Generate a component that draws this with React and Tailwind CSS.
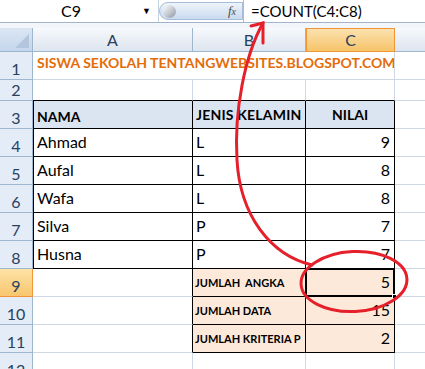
import React from "react";

const font = { fontFamily: "Lato, 'Liberation Sans', sans-serif" };

function RowHead({ n, selected }) {
  return (
    <div
      className={
        selected
          ? "w-[33px] shrink-0 flex items-end justify-center pb-[2px] border-r border-b border-[#f29536] bg-gradient-to-b from-[#fde3a6] to-[#f8c66e] text-[16px] leading-none text-[#27415f]"
          : "w-[33px] shrink-0 flex items-end justify-center pb-[2px] border-r border-b border-[#9eb6ce] bg-[#e4ecf7] text-[16px] leading-none text-[#27415f]"
      }
    >
      {n}
    </div>
  );
}

function Row({ n, h, selected, children }) {
  return (
    <div className={"flex " + h}>
      <RowHead n={n} selected={selected} />
      {children}
    </div>
  );
}

const grid = "border-r border-b border-[#d0d7e5]";

export default function App() {
  return (
    <div className="relative w-[425px] h-[369px] overflow-hidden bg-white" style={font}>
      {/* formula bar */}
      <div className="flex h-[23px] border-b border-[#a3b5cc] bg-white">
        <div className="w-[159px] flex items-center border-r border-[#c5d2e2]">
          <div className="w-[142px] text-center text-[16px] text-black">C9</div>
          <span className="text-[9px] text-black">▼</span>
        </div>
        <div className="w-[84px] my-[2px] flex items-center rounded-l-full border border-[#a6bcd8] bg-gradient-to-b from-[#eef4fb] to-[#c9daef]">
          <div className="ml-[3px] w-[13px] h-[13px] rounded-full bg-gradient-to-br from-[#ffffff] via-[#c8ccd3] to-[#8f969f]" />
          <span className="ml-auto mr-[6px] text-[13px] italic text-[#4a4a4a]" style={{ fontFamily: "'Liberation Serif', serif" }}>
            f<span className="text-[10px]">x</span>
          </span>
        </div>
        <div className="flex-1 flex items-center pl-[7px] border-l border-[#a6bcd8] text-[15px] text-black">
          =COUNT(C4:C8)
        </div>
      </div>
      <div className="h-[5px] bg-[#f2f5fa]" />

      {/* column headers */}
      <div className="flex h-[24px] text-[16px] text-[#27415f]">
        <div className="w-[33px] relative border-r border-b border-[#9eb6ce] bg-gradient-to-b from-[#dbe6f4] to-[#c5d6ec]">
          <div className="absolute right-[3px] bottom-[3px] w-0 h-0 border-l-[14px] border-l-transparent border-b-[14px] border-b-[#b3c6de]" />
        </div>
        <div className="w-[160px] flex items-center justify-center border-r border-b border-[#9eb6ce] bg-gradient-to-b from-[#f7f9fc] to-[#dde5ef]">A</div>
        <div className="w-[113px] flex items-center justify-center border-r border-b border-[#9eb6ce] bg-gradient-to-b from-[#f7f9fc] to-[#dde5ef]">B</div>
        <div className="w-[89px] flex items-center justify-center border border-[#f29536] bg-gradient-to-b from-[#fbe1ae] to-[#f6c468]">C</div>
        <div className="flex-1 border-b border-[#9eb6ce] bg-gradient-to-b from-[#f7f9fc] to-[#dde5ef]" />
      </div>

      {/* row 1 */}
      <Row n={1} h="h-[28px]">
        <div className="w-[160px] flex items-end pl-[4px] pb-[6px] border-b border-[#d0d7e5] overflow-visible whitespace-nowrap text-[14px] font-bold text-[#e46c0a]">
          SISWA SEKOLAH TENTANGWEBSITES.BLOGSPOT.COM
        </div>
        <div className="w-[113px] border-b border-[#d0d7e5]" />
        <div className={"w-[89px] " + grid} />
        <div className="flex-1 border-b border-[#d0d7e5]" />
      </Row>

      {/* row 2 */}
      <Row n={2} h="h-[21px]">
        <div className="w-[160px] border-r border-[#d0d7e5] border-b-black border-b" />
        <div className="w-[113px] border-r border-[#d0d7e5] border-b-black border-b" />
        <div className="w-[89px] border-r border-[#d0d7e5] border-b-black border-b" />
        <div className="flex-1 border-b border-[#d0d7e5]" />
      </Row>

      {/* row 3 headers */}
      <Row n={3} h="h-[28px]">
        <div className="w-[160px] flex items-start pt-[5px] pl-[4px] border-r border-b border-black bg-[#dbe5f1] text-[14px] font-bold text-black shadow-[inset_1px_0_0_#000]">NAMA</div>
        <div className="w-[113px] flex items-center pl-[3px] border-r border-b border-black bg-[#dbe5f1] text-[14px] font-bold text-black whitespace-nowrap tracking-[0.2px]">JENIS KELAMIN</div>
        <div className="w-[89px] flex items-center justify-center border-r border-b border-black bg-[#dbe5f1] text-[14px] font-bold text-black">NILAI</div>
        <div className="flex-1 border-b border-[#d0d7e5]" />
      </Row>

      {[
        [4, "Ahmad", "L", "9"],
        [5, "Aufal", "L", "8"],
        [6, "Wafa", "L", "8"],
        [7, "Silva", "P", "7"],
        [8, "Husna", "P", "7"],
      ].map(([n, nama, jk, nilai]) => (
        <Row key={n} n={n} h="h-[28px]">
          <div className="w-[160px] flex items-end pl-[4px] pb-[2px] border-r border-b border-black text-[16px] text-black shadow-[inset_1px_0_0_#000]">{nama}</div>
          <div className="w-[113px] flex items-end pl-[3px] pb-[2px] border-r border-b border-black text-[16px] text-black">{jk}</div>
          <div className="w-[89px] flex items-end justify-end pr-[4px] pb-[2px] border-r border-b border-black text-[16px] text-black">{nilai}</div>
          <div className="flex-1 border-b border-[#d0d7e5]" />
        </Row>
      ))}

      {[
        [9, "JUMLAH\u00a0 ANGKA", "5"],
        [10, "JUMLAH DATA", "15"],
        [11, "JUMLAH KRITERIA P", "2"],
      ].map(([n, label, val]) => (
        <Row key={n} n={n} h="h-[28px]" selected={n === 9}>
          <div className="w-[160px] border-r border-r-black border-b border-b-[#d0d7e5]" />
          <div className="w-[113px] flex items-end pl-[2px] pb-[5px] border-r border-b border-black bg-[#fde9d9] text-[11px] font-bold text-black whitespace-nowrap">{label}</div>
          <div
            className={
              n === 9
                ? "relative w-[89px] flex items-end justify-end pr-[4px] pb-[2px] border-r border-b border-black bg-[#fde9d9] text-[16px] text-black shadow-[inset_0_0_0_1px_#000]"
                : "w-[89px] flex items-end justify-end pr-[4px] pb-[2px] border-r border-b border-black bg-[#fde9d9] text-[16px] text-black"
            }
          >
            {val}
            {n === 9 && <div className="absolute -right-[3px] -bottom-[3px] w-[5px] h-[5px] bg-black border border-white" />}
          </div>
          <div className="flex-1 border-b border-[#d0d7e5]" />
        </Row>
      ))}

      <Row n={12} h="h-[28px]">
        <div className={"w-[160px] " + grid} />
        <div className={"w-[113px] " + grid} />
        <div className={"w-[89px] " + grid} />
        <div className="flex-1 border-b border-[#d0d7e5]" />
      </Row>

      {/* red annotation */}
      <svg className="absolute inset-0 pointer-events-none" width="425" height="369">
        <g fill="none" stroke="#e5202b" strokeWidth="3" strokeLinecap="round">
          <path d="M263,23 C245,55 234,110 237,160 C240,215 270,255 312,265" />
          <path d="M251,26 L263,23 L263,43" />
          <ellipse cx="354" cy="281.5" rx="53" ry="30" transform="rotate(-3 354 281.5)" />
        </g>
      </svg>
    </div>
  );
}
